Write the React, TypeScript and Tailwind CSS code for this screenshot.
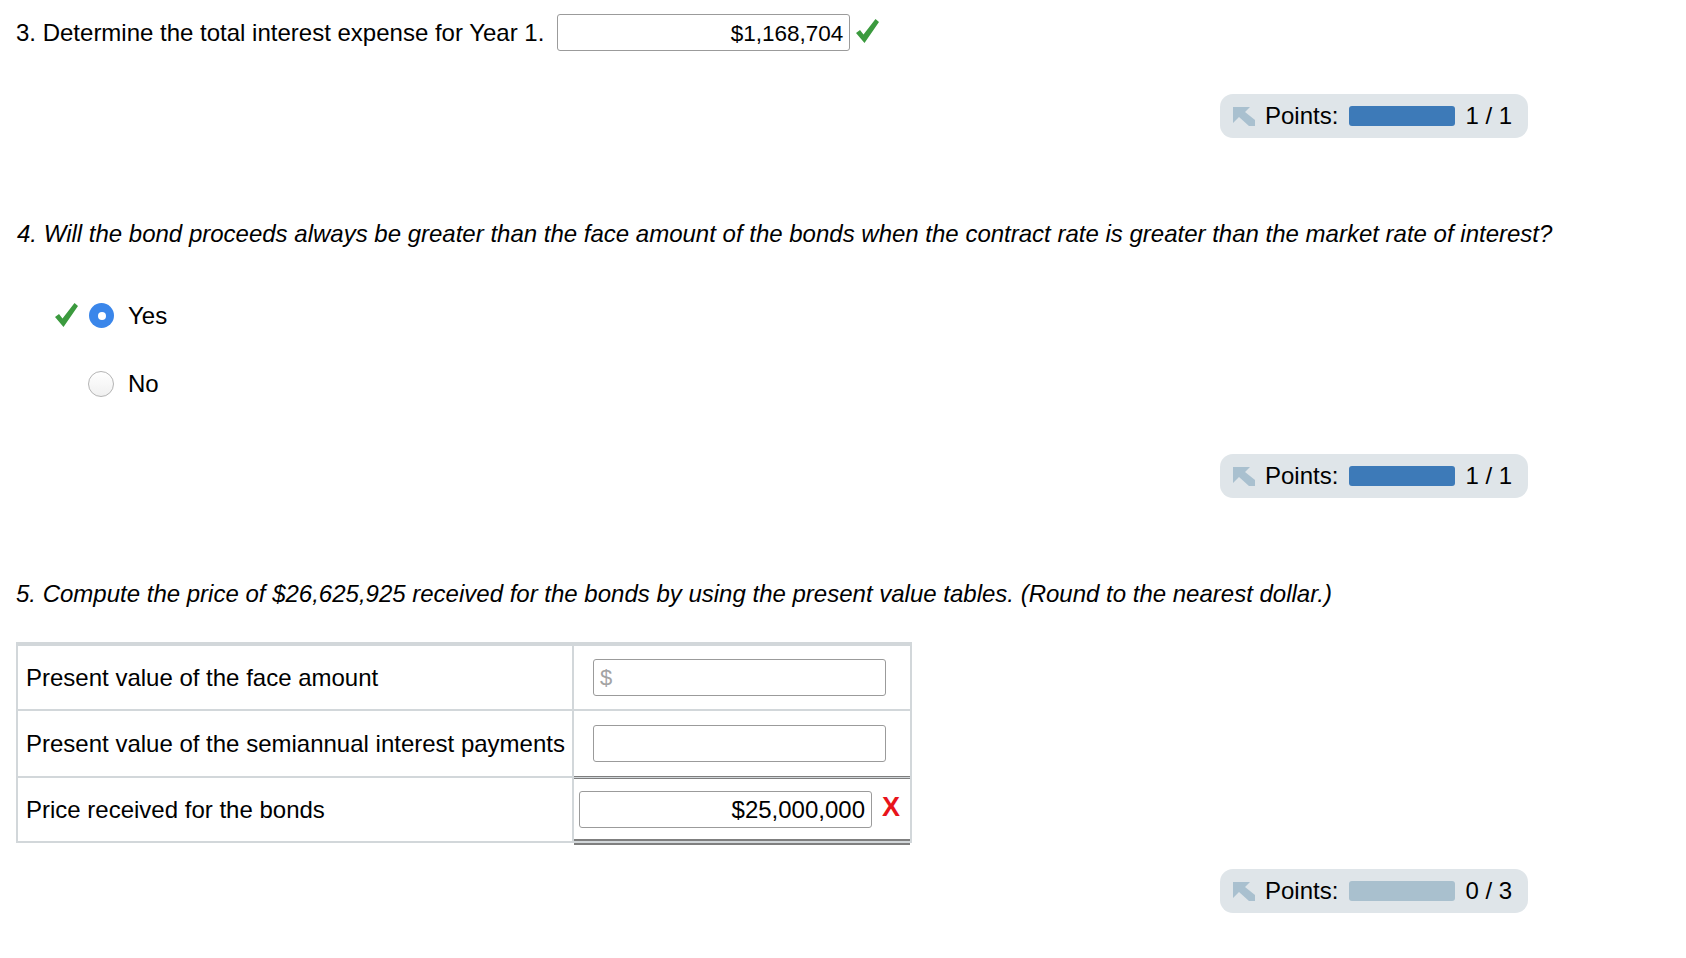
import React from "react";

const font = { fontFamily: '"Liberation Sans", Arial, Helvetica, sans-serif' };

function Check({ className }: { className?: string }) {
  return (
    <svg className={className} width="23" height="24" viewBox="0 0 23 24">
      <polygon points="0,14 4,11 7.5,15.5 19.5,0 23,3 8.5,24" fill="#3b9a3e" />
    </svg>
  );
}

function PointsIcon() {
  return (
    <svg width="22" height="19" viewBox="0 0 22 19">
      <polygon points="0,0 17,0 12,5 22,13 22,19 16,19 6,10 0,16" fill="#a9c0cf" />
    </svg>
  );
}

function Points({ score, full }: { score: string; full: boolean }) {
  return (
    <div className="flex justify-end pr-[158px]">
      <div className="flex h-[44px] w-[308px] items-center rounded-[13px] bg-[#dfe5e9] pl-[13px] text-[24px] text-black">
        <PointsIcon />
        <span className="ml-[10px] leading-none">Points:</span>
        <div
          className={
            "ml-[11px] h-[20px] w-[106px] rounded-[3px] " +
            (full ? "bg-[#3d7ab8]" : "bg-[#a9c0ce]")
          }
        />
        <span className="ml-[10px] leading-none">{score}</span>
      </div>
    </div>
  );
}

function Field({
  value,
  placeholder,
  size = "text-[24px]",
  valueClass = "",
}: {
  value?: string;
  placeholder?: string;
  size?: string;
  valueClass?: string;
}) {
  return (
    <div
      className={
        "flex h-[37px] w-[293px] items-center rounded-[3px] border border-[#9b9b9b] bg-white px-[6px] " +
        size +
        (value ? " justify-end" : " justify-start")
      }
    >
      {value ? (
        <span className={"leading-none text-black " + valueClass}>{value}</span>
      ) : placeholder ? (
        <span className="text-[22px] leading-none text-[#a3a3a3]">{placeholder}</span>
      ) : null}
    </div>
  );
}

export default function App() {
  return (
    <div className="min-h-[958px] w-[1686px] bg-white text-black" style={font}>
      {/* Q3 */}
      <div className="flex items-center pl-[16px] pt-[14px]">
        <span className="mt-[1px] text-[24px] leading-[28px]">3. Determine the total interest expense for Year 1.</span>
        <div className="ml-[13px]">
          <Field value="$1,168,704" size="text-[22.5px]" valueClass="mt-[3px]" />
        </div>
        <Check className="ml-[6px] -mt-[4px]" />
      </div>

      <div className="mt-[43px]">
        <Points score="1 / 1" full />
      </div>

      {/* Q4 */}
      <div className="mt-[82px] pl-[17px] text-[24px] italic leading-[28px]">
        4. Will the bond proceeds always be greater than the face amount of the bonds when the contract rate is greater than the market rate of interest?
      </div>

      <div className="mt-[55px] flex h-[25px] items-center pl-[55px]">
        <Check className="-mt-[2px]" />
        <div className="ml-[11px] flex h-[25px] w-[25px] items-center justify-center rounded-full bg-[#3a86ea]">
          <div className="h-[8px] w-[8px] rounded-full bg-white" />
        </div>
        <span className="ml-[14px] text-[24px] leading-none">Yes</span>
      </div>

      <div className="mt-[43px] flex h-[26px] items-center pl-[88px]">
        <div className="h-[26px] w-[26px] rounded-full border border-[#b4b4b4] bg-gradient-to-b from-white to-[#f0f0f0]" />
        <span className="ml-[14px] text-[24px] leading-none">No</span>
      </div>

      <div className="mt-[57px]">
        <Points score="1 / 1" full />
      </div>

      {/* Q5 */}
      <div className="mt-[82px] pl-[16px] text-[24px] italic leading-[28px]">
        5. Compute the price of $26,625,925 received for the bonds by using the present value tables. (Round to the nearest dollar.)
      </div>

      <div className="ml-[16px] mt-[34px] w-[896px] border-x-2 border-b-2 border-t-4 border-[#d2d7da]">
        <div className="flex h-[65px] border-b-2 border-[#d2d7da]">
          <div className="flex w-[556px] items-center border-r-2 border-[#d2d7da] pl-[8px] text-[24px]">
            Present value of the face amount
          </div>
          <div className="flex flex-1 items-center pl-[19px]">
            <Field placeholder="$" />
          </div>
        </div>
        <div className="flex h-[65px]">
          <div className="flex w-[556px] items-center border-r-2 border-[#d2d7da] pl-[8px] text-[24px]">
            Present value of the semiannual interest payments
          </div>
          <div className="flex flex-1 items-center pl-[19px]">
            <Field />
          </div>
        </div>
        <div className="flex h-[65px] border-t-2 border-[#d2d7da]">
          <div className="flex w-[556px] items-center border-r-2 border-[#d2d7da] pl-[8px] text-[24px]">
            Price received for the bonds
          </div>
          <div className="-mt-[2px] -mb-[4px] flex flex-1 items-center border-t-[3px] border-b-[6px] border-double border-t-[#7f7f7f] border-b-[#7f7f7f] pl-[5px]">
            <Field value="$25,000,000" valueClass="mt-[2px]" />
            <span className="ml-[10px] -mt-[4px] text-[27px] font-bold leading-none text-[#e8141b]">X</span>
          </div>
        </div>
      </div>

      <div className="mt-[26px]">
        <Points score="0 / 3" full={false} />
      </div>
    </div>
  );
}
